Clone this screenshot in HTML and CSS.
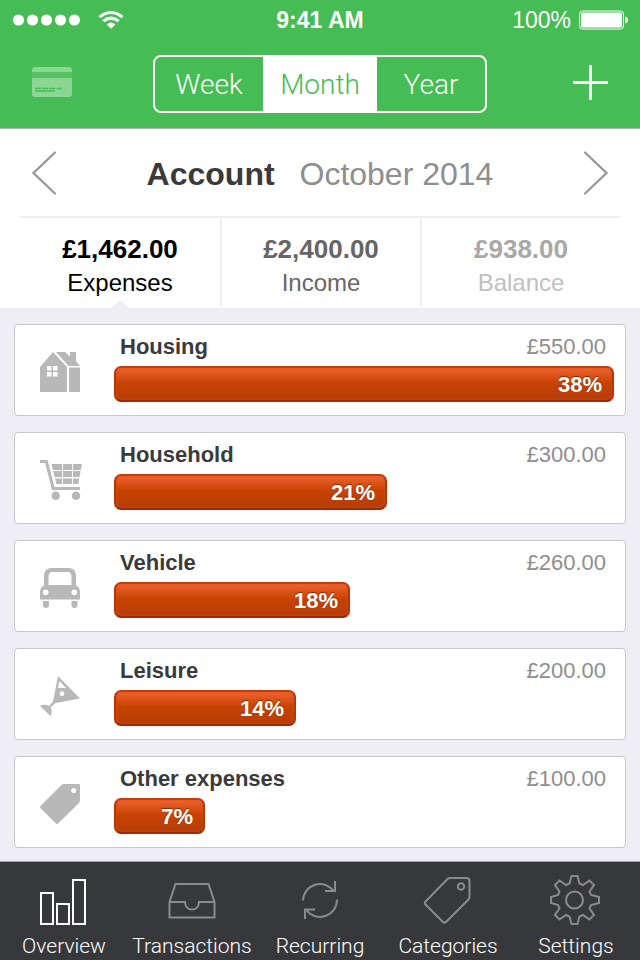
FILE: index.html
```html
<!DOCTYPE html>
<html lang="en">
<head>
    <meta charset="utf-8">
    <meta name="viewport" content="width=device-width, initial-scale=1">
    <title>Overview</title>
    <link rel="stylesheet" href="styles.css">
</head>
<body>
    <header class="header">
        <div class="status">
            <div class="status-left">
                <svg width="68" height="12" viewBox="0 0 68 12" fill="#fff">
                    <circle cx="6.5" cy="6" r="5.6"/>
                    <circle cx="20.5" cy="6" r="5.6"/>
                    <circle cx="34.5" cy="6" r="5.6"/>
                    <circle cx="48.5" cy="6" r="5.6"/>
                    <circle cx="62.4" cy="6" r="5.6"/>
                </svg>
                <svg width="26" height="18" viewBox="0 0 26 18" fill="none" stroke="#fff" stroke-width="3">
                    <path d="M1.5 6.2Q13 -3.2 24.5 6.2"/>
                    <path d="M5.3 10.2Q13 4 20.7 10.2"/>
                    <path d="M8.6 13.4Q13 9.8 17.4 13.4L13 17.8Z" fill="#fff" stroke="none"/>
                </svg>
            </div>
            <span class="time">9:41 AM</span>
            <div class="status-right">
                <span>100%</span>
                <svg width="50" height="20" viewBox="0 0 50 20">
                    <rect x="1.5" y="1" width="44" height="18" rx="3" fill="none" stroke="#fff"/>
                    <rect x="3" y="2.5" width="41" height="15" rx="1.5" fill="#fff"/>
                    <path d="M47 6.5Q50 7 50 10T47 13.5Z" fill="#fff"/>
                </svg>
            </div>
        </div>
        <div class="nav">
            <button class="icon-button" type="button" aria-label="Accounts">
                <svg width="40" height="30" viewBox="0 0 40 30">
                    <path d="M0 5V3Q0 0 3 0H37Q40 0 40 3V5Z" fill="#8dd594"/>
                    <path d="M0 5H40V11H0Z" fill="#57c163"/>
                    <path d="M0 11H40V27Q40 30 37 30H3Q0 30 0 27Z" fill="#8dd594"/>
                    <path d="M3 21.5H30" stroke="#45bc54" stroke-width="1.5" stroke-dasharray="6 1.2"/>
                    <path d="M3 24H23" stroke="#45bc54" stroke-width="1.5"/>
                </svg>
            </button>
            <div class="segments">
                <input type="radio" name="period" id="week">
                <label for="week">Week</label>
                <input type="radio" name="period" id="month" checked>
                <label for="month">Month</label>
                <input type="radio" name="period" id="year">
                <label for="year">Year</label>
            </div>
            <button class="icon-button" type="button" aria-label="Add">
                <svg width="35" height="35" viewBox="0 0 35 35" fill="none" stroke="#fff" stroke-width="3">
                    <path d="M0 17.5H35M17.5 0V35"/>
                </svg>
            </button>
        </div>
    </header>

    <section class="summary">
        <div class="month-row">
            <button class="icon-button" type="button" aria-label="Previous month">
                <svg width="25" height="44" viewBox="0 0 25 44" fill="none" stroke="#999" stroke-width="2.4" stroke-linecap="round">
                    <path d="M23 1.5L1.5 22L23 42.5"/>
                </svg>
            </button>
            <h1>Account <span>October 2014</span></h1>
            <button class="icon-button" type="button" aria-label="Next month">
                <svg width="25" height="44" viewBox="0 0 25 44" fill="none" stroke="#999" stroke-width="2.4" stroke-linecap="round">
                    <path d="M2 1.5L23.5 22L2 42.5"/>
                </svg>
            </button>
        </div>
        <div class="totals">
            <button class="total expenses" type="button"><b>£1,462.00</b>Expenses</button>
            <button class="total income" type="button"><b>£2,400.00</b>Income</button>
            <button class="total balance" type="button"><b>£938.00</b>Balance</button>
        </div>
    </section>

    <main class="list">
        <article class="card">
            <svg class="card-icon" width="42" height="42" viewBox="0 0 42 42" fill="#b8b8b8">
                <path d="M0 16L13 1L27 16V41H0Z"/>
                <path d="M29 16.5H40V41H29Z"/>
                <path d="M16 1H25L30 5.5V1H36V10L40 15H28.5Z"/>
                <path d="M7 15H11.5V19.5H7ZM13 15H17.5V19.5H13ZM7 21H11.5V25.5H7ZM13 21H17.5V25.5H13Z" fill="#fff"/>
            </svg>
            <div class="card-body">
                <div class="card-head"><h2>Housing</h2><span>£550.00</span></div>
                <div class="bar" style="width: 100%">38%</div>
            </div>
        </article>
        <article class="card">
            <svg class="card-icon" width="42" height="42" viewBox="0 0 42 42" fill="#b8b8b8">
                <path d="M0 1H7.5L14.5 28H40V31H12L5.2 4H0Z"/>
                <path d="M11.5 5H22V11H13ZM23 5H32V11H23ZM33 5H42L40.8 11H33Z"/>
                <path d="M13.2 12H22V18H14.7ZM23 12H32V18H23ZM33 12H40.6L39.6 18H33Z"/>
                <path d="M15 19.5H22V25H16.4ZM23 19.5H32V25H23ZM33 19.5H39.3L38.3 25H33Z"/>
                <circle cx="15.7" cy="36.8" r="4.3"/>
                <circle cx="36" cy="36.8" r="4.3"/>
            </svg>
            <div class="card-body">
                <div class="card-head"><h2>Household</h2><span>£300.00</span></div>
                <div class="bar" style="width: 54.6%">21%</div>
            </div>
        </article>
        <article class="card">
            <svg class="card-icon" width="42" height="42" viewBox="0 0 42 42" fill="#b8b8b8">
                <path fill-rule="evenodd" d="M4 18.5V8Q5 1 11 1H29Q35 1 36 8V18.5Q40 20 40 25V32.5H0V25Q0 20 4 18.5ZM8.5 18H31.5V9Q31 5 28 5H12Q9 5 8.5 9Z"/>
                <path d="M3 34H9V38Q9 41 6 41T3 38ZM31.5 34H37.5V38Q37.5 41 34.5 41T31.5 38Z"/>
                <circle cx="5.7" cy="25.3" r="2.8" fill="#fff"/>
                <circle cx="34.3" cy="25.3" r="2.8" fill="#fff"/>
            </svg>
            <div class="card-body">
                <div class="card-head"><h2>Vehicle</h2><span>£260.00</span></div>
                <div class="bar" style="width: 47.2%">18%</div>
            </div>
        </article>
        <article class="card">
            <svg class="card-icon" width="42" height="42" viewBox="0 0 42 42" fill="#b8b8b8">
                <path d="M18 1L40 23.5L15.5 28L10.5 32.5Q13 36 10.5 41L0 31Q4 28.5 9 31L13 26.5Z"/>
                <path d="M19.5 6L26 13H17.8Z" fill="#fff"/>
                <circle cx="22" cy="18.7" r="2.4" fill="#fff"/>
            </svg>
            <div class="card-body">
                <div class="card-head"><h2>Leisure</h2><span>£200.00</span></div>
                <div class="bar" style="width: 36.4%">14%</div>
            </div>
        </article>
        <article class="card">
            <svg class="card-icon" width="42" height="42" viewBox="0 0 42 42" fill="#b8b8b8">
                <path d="M22 1.5Q23 1 24 1H39Q40 1 40 2V17Q40 19 39 20L18 40.5Q17 41.5 16 40.5L0.5 25Q-0.5 24 0.5 23Z"/>
                <circle cx="33.7" cy="7.4" r="2.5" fill="#fff"/>
            </svg>
            <div class="card-body">
                <div class="card-head"><h2>Other expenses</h2><span>£100.00</span></div>
                <div class="bar" style="width: 18.2%">7%</div>
            </div>
        </article>
    </main>

    <nav class="tabs">
        <a class="tab active" href="#overview">
            <svg width="50" height="52" viewBox="0 0 50 52">
                <path d="M2 19H14V50H2ZM18 30H30V50H18ZM34 6H46V50H34Z"/>
            </svg>
            Overview
        </a>
        <a class="tab" href="#transactions">
            <svg width="50" height="52" viewBox="0 0 50 52">
                <path d="M8.5 10H41.5L47.5 28V43.5H2.5V28ZM2.5 28H18Q18.5 35.5 25 35.5T32 28H47.5"/>
            </svg>
            Transactions
        </a>
        <a class="tab" href="#recurring">
            <svg width="50" height="52" viewBox="0 0 50 52">
                <path d="M8 26.5A17 17 0 0 1 39 17.5M40 7V17H30M42 25.5A17 17 0 0 1 11 35.5M10 45V35.5H20"/>
            </svg>
            Recurring
        </a>
        <a class="tab" href="#categories">
            <svg width="50" height="52" viewBox="0 0 50 52">
                <path d="M27 4H43.5Q46.5 4 46.5 7V22.5Q46.5 24.5 45 26L23 48Q21.5 49.5 20 48L2.5 30.5Q1 29 2.5 27.5L24.5 5Q25.5 4 27 4Z"/>
                <circle cx="38" cy="12.5" r="3.2"/>
            </svg>
            Categories
        </a>
        <a class="tab" href="#settings">
            <svg width="50" height="52" viewBox="0 0 50 52">
                <path d="M20.5 2H26.5L28.5 9.5L32 11L38.5 6.5L43 11L38.5 17.5L40 21L48 23V29L40 31L38.5 34.5L43 41L38.5 45.5L32 41L28.5 42.5L26.5 50H20.5L18.5 42.5L15 41L8.5 45.5L4 41L8.5 34.5L7 31L0 29V23L7 21L8.5 17.5L4 11L8.5 6.5L15 11L18.5 9.5Z"/>
                <circle cx="23.5" cy="26" r="8.5"/>
            </svg>
            Settings
        </a>
    </nav>
</body>
</html>
```

FILE: styles.css
```css
* {
    box-sizing: border-box;
}
body {
    margin: 0;
    min-height: 100vh;
    display: flex;
    flex-direction: column;
    background-color: #efeef4;
    font-family: "Liberation Sans", Arial, sans-serif;
    color: #3a3a3c;
}
svg {
    display: block;
    overflow: visible;
}
button {
    font: inherit;
    color: inherit;
    background: none;
    border: none;
    padding: 0;
    cursor: pointer;
}

/* header */
.header {
    background-color: #45bc54;
    border-bottom: 1px solid #a5b5a7;
    color: #fff;
}
.status {
    height: 40px;
    padding: 2px 12px;
    display: grid;
    grid-template-columns: 1fr auto 1fr;
    align-items: center;
    font-size: 23px;
}
.status-left,
.status-right {
    display: flex;
    align-items: center;
    gap: 18px;
}
.status-right {
    justify-content: flex-end;
    gap: 7px;
}
.time {
    font-weight: bold;
}
.nav {
    height: 88px;
    padding: 0 32px;
    display: grid;
    grid-template-columns: 1fr 334px 1fr;
    align-items: center;
}
.nav .icon-button {
    margin-bottom: 4px;
}
.icon-button:last-child {
    justify-self: end;
}
.segments {
    height: 58px;
    display: grid;
    grid-template-columns: 1fr 114px 1fr;
    border: 2px solid #fff;
    border-radius: 8px;
    overflow: hidden;
    font-family: Roboto, "Liberation Sans", sans-serif;
    font-weight: 300;
    font-size: 28px;
    line-height: 56px;
    text-align: center;
}
.segments input {
    position: absolute;
    opacity: 0;
}
.segments input:checked + label {
    background-color: #fff;
    color: #45bc54;
}

/* account summary */
.summary {
    background-color: #fff;
    padding: 0 20px 2px;
}
.month-row {
    height: 87px;
    padding: 0 12px;
    display: flex;
    align-items: center;
    justify-content: space-between;
}
h1 {
    margin: 0;
    padding-top: 4px;
    font-size: 32px;
}
h1 span {
    margin-left: 16px;
    font-weight: normal;
    color: #8e8e8e;
}
.totals {
    display: grid;
    grid-template-columns: 1fr 1fr 1fr;
    border-top: 2px solid #efeff1;
}
.total {
    position: relative;
    height: 88px;
    padding-top: 8px;
    font-size: 24px;
    line-height: 34px;
}
.total + .total {
    border-left: 2px solid #efeff1;
}
.total b {
    display: block;
    font-size: 26px;
}
.expenses {
    color: #000;
}
.expenses::after {
    content: "";
    position: absolute;
    left: 50%;
    bottom: -2px;
    margin-left: -9px;
    border: 9px solid transparent;
    border-top: none;
    border-bottom: 8px solid #efeef4;
}
.income {
    color: #666;
}
.balance {
    color: #c0c0c0;
}
.balance b {
    color: #a8a8a8;
}

/* category list */
.list {
    flex: 1;
    padding: 16px 14px 13px;
    display: flex;
    flex-direction: column;
    gap: 16px;
}
.card {
    display: flex;
    align-items: center;
    gap: 32px;
    padding: 8px 11px 13px 25px;
    background-color: #fff;
    border: 1px solid #c9c9cc;
    border-radius: 4px;
}
.card-icon {
    flex: none;
    margin-top: 8px;
}
.card-body {
    flex: 1;
}
.card-head {
    display: flex;
    justify-content: space-between;
    padding: 0 8px 5px 6px;
    font-size: 22px;
    line-height: 28px;
}
.card-head h2 {
    margin: 0;
    font-size: 22px;
}
.card-head span {
    color: #8e8e8e;
}
.bar {
    height: 36px;
    padding-right: 10px;
    border: 2px solid #b93305;
    border-top-color: #cb3a09;
    border-bottom-color: #9a2b05;
    border-radius: 7px;
    background: linear-gradient(#ef6431, #c84303 45%, #b43c08);
    box-shadow: inset 0 0 3px #d95016;
    color: #fff;
    font-size: 22px;
    font-weight: bold;
    line-height: 34px;
    text-align: right;
    text-shadow: 0 -1px 1px #7d2a05;
}

/* bottom tabs */
.tabs {
    display: grid;
    grid-template-columns: repeat(5, 1fr);
    height: 99px;
    padding-top: 12px;
    background-color: #37383c;
    border-top: 1px solid #a0a0a4;
}
.tab {
    display: flex;
    flex-direction: column;
    align-items: center;
    gap: 6px;
    color: #fff;
    font-family: Roboto, "Liberation Sans", sans-serif;
    font-weight: 300;
    font-size: 21px;
    line-height: 28px;
    text-decoration: none;
}
.tab svg {
    fill: none;
    stroke: #8b8b8d;
    stroke-width: 2;
}
.tab.active svg {
    stroke: #fff;
}
```
